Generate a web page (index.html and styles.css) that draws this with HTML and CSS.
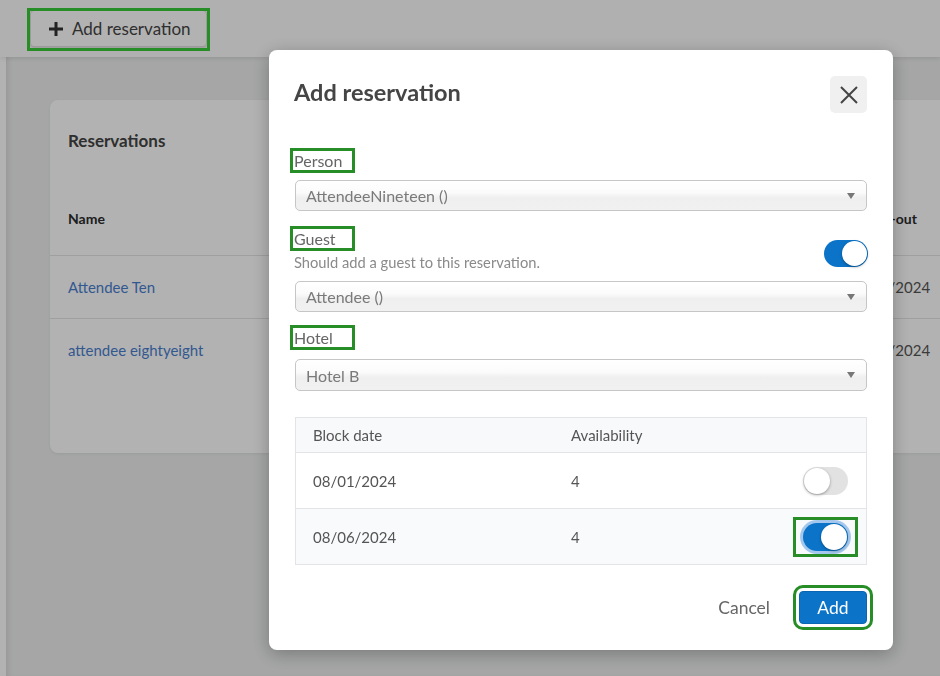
FILE: index.html
```html
<!DOCTYPE html>
<html lang="en">
<head>
<meta charset="utf-8">
<title>Add reservation</title>
<link rel="stylesheet" href="styles.css">
</head>
<body>
<header class="topbar">
  <button class="add-btn" type="button">
    <svg class="plus" width="14" height="14" viewBox="0 0 14 14"><rect x="5.5" y="0" width="3" height="14" fill="#333"/><rect x="0" y="5.5" width="14" height="3" fill="#333"/></svg>
    <span>Add reservation</span>
  </button>
</header>
<div class="layout">
  <div class="rail"></div>
  <main class="main">
    <section class="card">
      <h2 class="card-title">Reservations</h2>
      <div class="res-grid">
        <div class="cell head first">Name</div><div class="cell head last-col">Check-out</div>
        <div class="cell first row"><a class="link">Attendee Ten</a></div><div class="cell row">08/12/2024</div>
        <div class="cell first row"><a class="link">attendee eightyeight</a></div><div class="cell row">08/12/2024</div>
      </div>
    </section>
  </main>
</div>

<div class="overlay"></div>
<div class="annot annot-topbtn"></div>

<div class="modal" role="dialog">
  <div class="modal-head">
    <h1 class="modal-title">Add reservation</h1>
    <button class="close" type="button" aria-label="Close">
      <svg width="18" height="18" viewBox="0 0 18 18"><path d="M1 1 L17 17 M17 1 L1 17" stroke="#444" stroke-width="2" fill="none"/></svg>
    </button>
  </div>

  <div class="label-row first-label"><span class="field-label mark">Person</span></div>
  <div class="select">
    <span>AttendeeNineteen ()</span>
    <span class="caret"></span>
  </div>

  <div class="guest-row">
    <div class="guest-text">
      <div class="label-row"><span class="field-label mark">Guest</span></div>
      <div class="help">Should add a guest to this reservation.</div>
    </div>
    <span class="toggle on guest-toggle"><span class="knob"></span></span>
  </div>
  <div class="select select-2">
    <span>Attendee ()</span>
    <span class="caret"></span>
  </div>

  <div class="label-row hotel-label"><span class="field-label mark">Hotel</span></div>
  <div class="select select-3">
    <span>Hotel B</span>
    <span class="caret"></span>
  </div>

  <div class="blocks">
    <div class="brow bhead">
      <span>Block date</span><span>Availability</span><span></span>
    </div>
    <div class="brow">
      <span>08/01/2024</span><span>4</span>
      <span class="tcell"><span class="toggle off"><span class="knob"></span></span></span>
    </div>
    <div class="brow alt last">
      <span>08/06/2024</span><span>4</span>
      <span class="tcell"><span class="toggle-mark mark"><span class="toggle on focus"><span class="knob"></span></span></span></span>
    </div>
  </div>

  <div class="footer">
    <button class="cancel" type="button">Cancel</button>
    <button class="primary mark-btn" type="button">Add</button>
  </div>
</div>
</body>
</html>
```

FILE: styles.css
```css
* { box-sizing: border-box; }

html, body {
  margin: 0;
  padding: 0;
  height: 100%;
  overflow: hidden;
}

body {
  font-family: Lato, "Noto Sans", "Liberation Sans", sans-serif;
  background: #fdfdfd;
  color: #444;
}

/* ---------- background page ---------- */
.topbar {
  height: 57px;
  padding: 10px 0 0 30px;
  background: #fcfcfc;
  box-shadow: 0 2px 4px rgba(0,0,0,0.08);
  position: relative;
  z-index: 1;
}

.add-btn {
  display: flex;
  align-items: center;
  gap: 9px;
  height: 37px;
  width: 177px;
  padding: 0 0 0 18px;
  border: 1px solid #dedede;
  border-radius: 4px;
  background: #ffffff;
  box-shadow: 0 1px 2px rgba(0,0,0,0.12);
  font-family: inherit;
  font-size: 17px;
  color: #444;
}

.plus { flex: none; }

.layout {
  display: flex;
  height: calc(100% - 57px);
}

.rail {
  width: 6px;
  background: #ffffff;
  flex: none;
}

.main {
  flex: 1;
  background: #eceeed;
  box-shadow: inset 5px 0 6px -4px rgba(0,0,0,0.12);
  padding: 43px 0 0 44px;
  overflow: hidden;
}

.card {
  width: 1000px;
  height: 353px;
  background: #ffffff;
  border-radius: 8px;
  box-shadow: 0 1px 3px rgba(0,0,0,0.06);
}

.card-title {
  margin: 0;
  padding: 30px 0 0 18px;
  font-size: 17px;
  line-height: 22px;
  font-weight: 700;
  color: #444;
}

.res-grid {
  margin-top: 29px;
  display: grid;
  grid-template-columns: 797px 1fr;
}

.cell {
  display: flex;
  align-items: center;
  font-size: 15px;
  color: #555;
}

.cell.first { padding-left: 18px; }

.cell.head {
  height: 74px;
  font-size: 14px;
  font-weight: 700;
  color: #2b2b2b;
}

.cell.head.last-col { padding-left: 5px; }

.cell.row {
  height: 63px;
  border-top: 1px solid #e4e4e4;
}

.link { color: #4a7fcf; text-decoration: none; }

/* ---------- overlay ---------- */
.overlay {
  position: fixed;
  inset: 0;
  background: rgba(0,0,0,0.3);
  z-index: 10;
}

.annot {
  position: absolute;
  border: 3px solid #278d27;
  z-index: 11;
}

.annot-topbtn {
  left: 27px;
  top: 8px;
  width: 183px;
  height: 43px;
}

/* ---------- modal ---------- */
.modal {
  position: fixed;
  z-index: 12;
  left: 269px;
  top: 50px;
  width: 624px;
  height: 600px;
  background: #ffffff;
  border-radius: 8px;
  box-shadow: 0 4px 18px rgba(0,0,0,0.28);
  padding: 26px 26px 0 25px;
  display: flex;
  flex-direction: column;
}

.modal-head {
  display: flex;
  justify-content: space-between;
  align-items: center;
  height: 37px;
}

.modal-title {
  margin: 0 0 5px 0;
  font-size: 23.5px;
  font-weight: 700;
  color: #454545;
}

.close {
  width: 37px;
  height: 37px;
  border: none;
  border-radius: 5px;
  background: #f0f0f0;
  display: flex;
  align-items: center;
  justify-content: center;
  padding: 0;
}

.mark { outline: 3px solid #278d27; }

.label-row {
  height: 19px;
  line-height: 19px;
}

.first-label { margin-top: 38px; }
.hotel-label { margin-top: 16px; }

.field-label {
  display: inline-block;
  width: 59px;
  height: 19px;
  margin-left: -1px;
  padding-left: 1px;
  font-size: 16px;
  line-height: 19px;
  color: #666;
}

.select {
  margin-top: 10px;
  margin-left: 1px;
  height: 31px;
  border: 1px solid #c6c6c6;
  border-radius: 5px;
  background: linear-gradient(to bottom, #ffffff 0%, #fbfbfb 40%, #efefef 58%, #f1f1f1 100%);
  display: flex;
  align-items: center;
  justify-content: space-between;
  padding: 0 11px 0 10px;
  font-size: 16px;
  color: #7a7a7a;
}

.select-2 { margin-top: 11px; }
.select-3 { margin-top: 12px; height: 32px; }

.caret {
  width: 0;
  height: 0;
  border-left: 4.5px solid transparent;
  border-right: 4.5px solid transparent;
  border-top: 6px solid #777;
}

.guest-row {
  margin-top: 18px;
  display: flex;
  justify-content: space-between;
  align-items: flex-end;
}

.help {
  margin-top: 6px;
  font-size: 14.7px;
  line-height: 16px;
  color: #8a8a8a;
}

.toggle {
  display: flex;
  align-items: center;
  width: 45px;
  height: 28px;
  border-radius: 14px;
  padding: 1px;
}

.toggle .knob {
  width: 26px;
  height: 26px;
  border-radius: 50%;
  background: #ffffff;
  box-shadow: 0 1px 3px rgba(0,0,0,0.35);
}

.toggle.on {
  background: #0b74c8;
  justify-content: flex-end;
}

.toggle.off {
  background: #e2e2e2;
  justify-content: flex-start;
}

.guest-toggle {
  width: 44px;
  height: 27px;
  margin-bottom: 3px;
  margin-right: -1px;
}

.guest-toggle .knob { width: 25px; height: 25px; }

.toggle.focus { box-shadow: 0 0 0 3px rgba(60,140,220,0.45); }

.toggle-mark {
  display: inline-flex;
  padding: 3px 7px;
}

.blocks {
  margin-top: 26px;
  margin-left: 1px;
  border: 1px solid #e2e4e7;
}

.brow {
  display: grid;
  grid-template-columns: 258px 1fr auto;
  align-items: center;
  height: 56px;
  padding: 0 18px 0 17px;
  border-bottom: 1px solid #e2e4e7;
  font-size: 15px;
  color: #555;
}

.brow.last { border-bottom: none; height: 55px; }
.brow.alt { background: #f9fafc; }

.bhead {
  height: 35px;
  background: #f8f9fb;
  color: #555;
}

.tcell {
  display: flex;
  justify-content: flex-end;
}

.brow .tcell .toggle-mark { margin-right: -7px; }

.footer {
  margin-top: 26px;
  display: flex;
  justify-content: flex-end;
  align-items: center;
  gap: 29px;
}

.cancel {
  border: none;
  background: none;
  padding: 0;
  font-family: inherit;
  font-size: 17.5px;
  color: #666;
}

.primary {
  width: 68px;
  height: 33px;
  border: 1px solid #0a66b2;
  border-radius: 4px;
  background: #0b74c8;
  color: #ffffff;
  font-family: inherit;
  font-size: 17.5px;
  padding: 0;
}

.mark-btn {
  outline: 3px solid #278d27;
  outline-offset: 3px;
}
```
